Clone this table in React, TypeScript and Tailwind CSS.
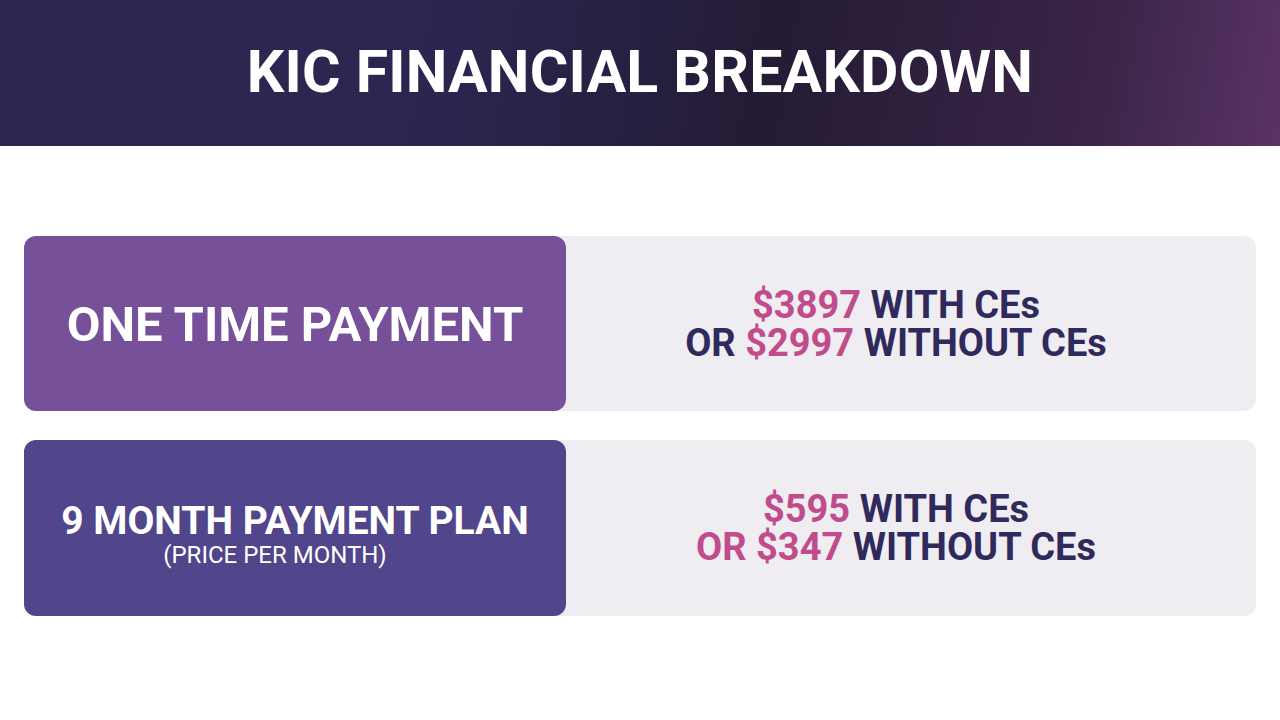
const font = { fontFamily: 'Roboto, "Liberation Sans", sans-serif' };

function Price({ a, b, c, d }: { a: React.ReactNode; b: string; c: React.ReactNode; d: string }) {
  return (
    <div className="text-[38px] leading-[38px] font-bold text-center text-[#302a5c] pr-[30px]">
      <div>
        {a} {b}
      </div>
      <div>
        {c} {d}
      </div>
    </div>
  );
}

export default function App() {
  return (
    <div className="w-[1280px] h-[720px] bg-white flex flex-col" style={font}>
      <header className="h-[146px] flex items-center justify-center bg-[linear-gradient(100deg,#2c2851_0%,#2b2650_35%,#241b35_60%,#3a2447_85%,#5a3366_100%)]">
        <h1 className="text-[59px] font-bold text-white tracking-[0.2px] -mt-[2px]">KIC FINANCIAL BREAKDOWN</h1>
      </header>

      <div className="flex flex-col gap-[29px] px-6 pt-[90px]">
        <div className="flex h-[175px] rounded-xl bg-[#efecf2]">
          <div className="w-[542px] rounded-xl bg-[#76519a] flex items-center justify-center">
            <span className="text-[49px] font-bold text-white pt-[2px]">ONE TIME PAYMENT</span>
          </div>
          <div className="flex-1 flex items-center justify-center">
            <Price
              a={<span className="text-[#c04c8c]">$3897</span>}
              b="WITH CEs"
              c={<>OR <span className="text-[#c04c8c]">$2997</span></>}
              d="WITHOUT CEs"
            />
          </div>
        </div>

        <div className="flex h-[176px] rounded-xl bg-[#efecf2]">
          <div className="w-[542px] rounded-xl bg-[#51458b] flex flex-col items-center justify-center text-white pt-[12px]">
            <span className="text-[39px] font-bold leading-[42px]">9 MONTH PAYMENT PLAN</span>
            <span className="text-[24px] leading-[26px] pr-[40px]">(PRICE PER MONTH)</span>
          </div>
          <div className="flex-1 flex items-center justify-center">
            <Price
              a={<span className="text-[#c04c8c]">$595</span>}
              b="WITH CEs"
              c={<span className="text-[#c04c8c]">OR $347</span>}
              d="WITHOUT CEs"
            />
          </div>
        </div>
      </div>
    </div>
  );
}
